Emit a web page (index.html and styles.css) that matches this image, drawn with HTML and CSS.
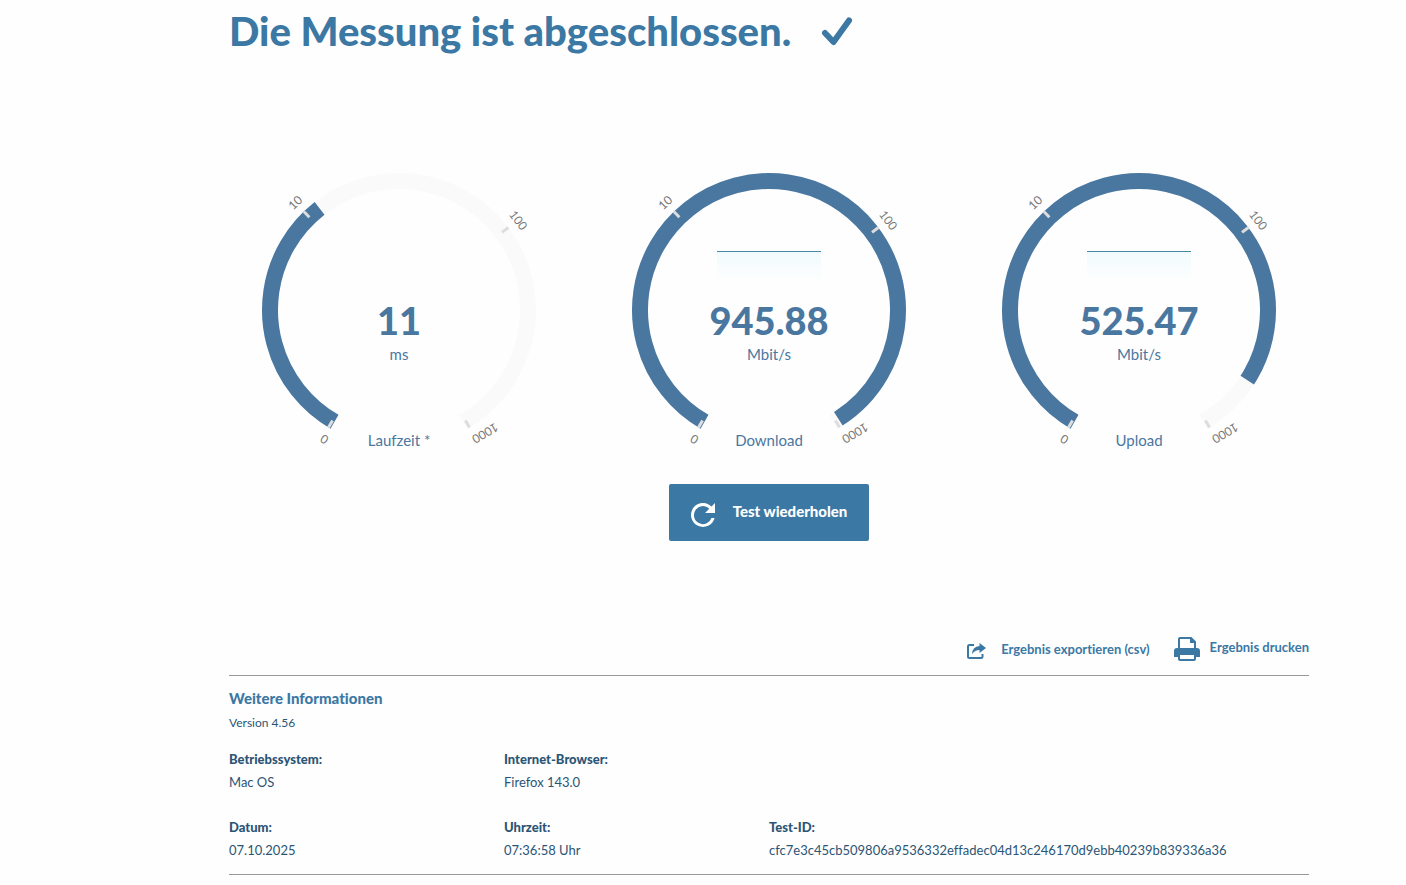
FILE: index.html
```
<!DOCTYPE html>
<html lang="de">
<head>
  <meta charset="UTF-8" />
  <meta name="viewport" content="width=device-width, initial-scale=1.0"/>
  <title>Breitbandmessung</title>
  <link rel="stylesheet" href="styles.css">
</head>
<body>
  <main id="container">
    <div class="header">
      <h1>Die Messung ist abgeschlossen.</h1>
      <svg class="check" viewBox="0 0 32 30" aria-hidden="true">
        <path d="M4 17l8.500 9L28 4.500" />
      </svg>
    </div>

    <div class="gauges">
      <svg class="gauge" viewBox="0 0 340 300" role="img" aria-label="Laufzeit 11 ms">
        <circle class="track" cx="170" cy="150" r="129" pathLength="360" stroke-dasharray="300 360" transform="rotate(120 170 150)" />
        <circle class="value" cx="170" cy="150" r="129" pathLength="360" stroke-dasharray="112 360" transform="rotate(120 170 150)" />
        <use href="#scale" />
        <text class="number" x="170" y="175">11</text>
        <text class="unit" x="170" y="200">ms</text>
        <text class="unit" x="170" y="286">Laufzeit *</text>
      </svg>
      <svg class="gauge" viewBox="0 0 340 300" role="img" aria-label="Download 945.88 Mbit/s">
        <circle class="track" cx="170" cy="150" r="129" pathLength="360" stroke-dasharray="300 360" transform="rotate(120 170 150)" />
        <circle class="value" cx="170" cy="150" r="129" pathLength="360" stroke-dasharray="297.500 360" transform="rotate(120 170 150)" />
        <use href="#scale" />
        <use href="#history" />
        <text class="number" x="170" y="175">945.88</text>
        <text class="unit" x="170" y="200">Mbit/s</text>
        <text class="unit" x="170" y="286">Download</text>
      </svg>
      <svg class="gauge" viewBox="0 0 340 300" role="img" aria-label="Upload 525.47 Mbit/s">
        <circle class="track" cx="170" cy="150" r="129" pathLength="360" stroke-dasharray="300 360" transform="rotate(120 170 150)" />
        <circle class="value" cx="170" cy="150" r="129" pathLength="360" stroke-dasharray="273 360" transform="rotate(120 170 150)" />
        <use href="#scale" />
        <use href="#history" />
        <text class="number" x="170" y="175">525.47</text>
        <text class="unit" x="170" y="200">Mbit/s</text>
        <text class="unit" x="170" y="286">Upload</text>
      </svg>
    </div>

    <button class="repeat" type="button">
      <svg viewBox="0 0 24 24" aria-hidden="true">
        <path d="M20.500 3.500A12 12 0 1 0 23.600 15h-3.100a9 9 0 1 1-2.200-9.300L14 10h10V0z" />
      </svg>
      <span>Test wiederholen</span>
    </button>

    <div class="actions">
      <a href="#export">
        <svg class="export" viewBox="0 0 20 16" aria-hidden="true">
          <path d="M7 2H2.500Q1 2 1 3.500v10Q1 15 2.500 15h11.500q1.500 0 1.500-1.500V11" fill="none" stroke="currentColor" stroke-width="2" />
          <path d="M12.500 0L19 5l-6.500 5V7Q8 7 5 11Q5.500 3.500 12.500 3z" fill="currentColor" />
        </svg>
        <span>Ergebnis exportieren (csv)</span>
      </a>
      <a href="#print">
        <svg class="print" viewBox="0 0 26 24" aria-hidden="true">
          <path d="M5 11V2q0-1 1-1h11l4 4v6" fill="none" stroke="currentColor" stroke-width="2" />
          <path d="M16 1v5h5L17 1z" fill="currentColor" />
          <path d="M3 11h20q3 0 3 3v6h-4v-3H4v3H0v-6q0-3 3-3z" fill="currentColor" />
          <path d="M5 17h16v5q0 1-1 1H6q-1 0-1-1z" fill="#fff" stroke="currentColor" stroke-width="2" />
        </svg>
        <span>Ergebnis drucken</span>
      </a>
    </div>

    <section class="info">
      <h2>Weitere Informationen</h2>
      <p class="version">Version 4.56</p>
      <dl>
        <div><dt>Betriebssystem:</dt><dd>Mac OS</dd></div>
        <div><dt>Internet-Browser:</dt><dd>Firefox 143.0</dd></div>
        <div class="first"><dt>Datum:</dt><dd>07.10.2025</dd></div>
        <div><dt>Uhrzeit:</dt><dd>07:36:58 Uhr</dd></div>
        <div><dt>Test-ID:</dt><dd>cfc7e3c45cb509806a9536332effadec04d13c246170d9ebb40239b839336a36</dd></div>
      </dl>
    </section>
  </main>

  <!-- shared gauge parts -->
  <svg class="defs" aria-hidden="true">
    <defs>
      <linearGradient id="fade" x1="0" y1="0" x2="0" y2="1">
        <stop offset="0" stop-color="#f1fbfd" />
        <stop offset="1" stop-color="#fefefe" />
      </linearGradient>
      <g id="scale">
        <g class="ticks">
          <path d="M170 13v8" transform="rotate(211 170 150)" />
          <path d="M170 13v8" transform="rotate(-44 170 150)" />
          <path d="M170 13v8" transform="rotate(53 170 150)" />
          <path d="M170 13v8" transform="rotate(149 170 150)" />
        </g>
        <g class="labels">
          <text x="170" y="5" transform="rotate(210 170 150)">0</text>
          <text x="170" y="5" transform="rotate(-44 170 150)">10</text>
          <text x="170" y="5" transform="rotate(53 170 150)">100</text>
          <text x="170" y="5" transform="translate(256 273) rotate(-30) rotate(180) translate(-170 -1)">1000</text>
        </g>
      </g>
      <g id="history">
        <rect x="118" y="91" width="104" height="32" fill="url(#fade)" />
        <rect x="118" y="91" width="104" height="1" fill="#478aa7" />
      </g>
    </defs>
  </svg>
</body>
</html>
```
FILE: styles.css
```
* {
  box-sizing: border-box;
  margin: 0;
  padding: 0;
}

body {
  font-family: Lato, "Noto Sans", sans-serif;
  font-variant-ligatures: none;
  background-color: #fefefe;
  color: #2b5575;
}

#container {
  padding: 4px 97px 10px 229px;
}

.header {
  display: flex;
  align-items: center;
  gap: 30px;
}

.header h1 {
  font-size: 40px;
  line-height: 54px;
  font-weight: 900;
  color: #3b78a4;
}

.check {
  width: 32px;
  height: 30px;
  fill: none;
  stroke: #3b78a4;
  stroke-width: 6;
  stroke-linecap: round;
  stroke-linejoin: round;
}

.gauges {
  display: grid;
  grid-template-columns: repeat(3, 1fr);
  gap: 30px;
  margin-top: 102px;
}

.gauge {
  display: block;
  width: 100%;
  overflow: visible;
}

.gauge circle {
  fill: none;
  stroke-width: 16;
}

.track {
  stroke: #fafafa;
}

.value {
  stroke: #4a77a0;
}

.ticks {
  stroke: #ddd;
  stroke-width: 3;
}

.gauge text, .labels text {
  text-anchor: middle;
}

.labels {
  font-size: 12px;
  fill: #777;
}

.number {
  font-size: 38px;
  font-weight: 900;
  fill: #4a77a0;
}

.unit {
  font-size: 15px;
  fill: #4a77a0;
}

.repeat {
  display: flex;
  align-items: center;
  gap: 18px;
  height: 57px;
  margin: 24px auto 0;
  padding: 0 22px;
  border: none;
  border-radius: 2px;
  background-color: #3b78a4;
  color: #fff;
  font-family: inherit;
  font-size: 15px;
  font-weight: 900;
  cursor: pointer;
}

.repeat svg {
  width: 24px;
  height: 24px;
  margin-top: 4px;
  fill: #fff;
}

.repeat span {
  padding-bottom: 4px;
}

.actions {
  display: flex;
  justify-content: flex-end;
  align-items: center;
  gap: 24px;
  height: 53px;
  margin-top: 81px;
}

.actions a {
  display: flex;
  align-items: center;
  color: #3b78a4;
  font-size: 13px;
  line-height: 20px;
  font-weight: 700;
  text-decoration: none;
}

.actions a span {
  padding-bottom: 4px;
}

.actions a:first-child {
  padding-top: 4px;
}

.export {
  width: 20px;
  height: 16px;
  margin-right: 14px;
}

.print {
  width: 26px;
  height: 24px;
  margin-right: 10px;
}

.info {
  padding: 12px 0 12px;
  border-top: 1px solid #999;
  border-bottom: 1px solid #999;
}

.info h2 {
  font-size: 15px;
  line-height: 20px;
  font-weight: 900;
  color: #3b78a4;
}

.version {
  margin-top: 6px;
  font-size: 12px;
  line-height: 18px;
}

.info dl {
  display: grid;
  grid-template-columns: 275px 265px 1fr;
  row-gap: 22px;
  margin-top: 16px;
  font-size: 13px;
  line-height: 23px;
}

.info .first {
  grid-column: 1;
}

.info dt {
  font-weight: 900;
}

.defs {
  position: absolute;
  width: 0;
  height: 0;
}

@media (max-width: 1100px) {
  #container {
    padding: 4px 24px 10px;
  }

  .info dl {
    grid-template-columns: 1fr;
  }
}
```
